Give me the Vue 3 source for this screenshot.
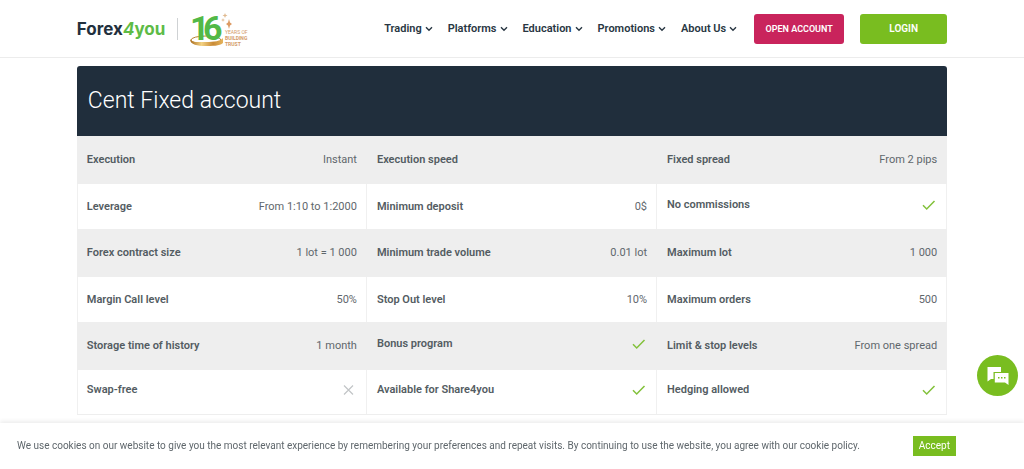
<script setup>
const menu = ['Trading', 'Platforms', 'Education', 'Promotions', 'About Us']

const rows = [
  [['Execution', 'Instant'], ['Execution speed', ''], ['Fixed spread', 'From 2 pips']],
  [['Leverage', 'From 1:10 to 1:2000'], ['Minimum deposit', '0$'], ['No commissions', true]],
  [['Forex contract size', '1 lot = 1 000'], ['Minimum trade volume', '0.01 lot'], ['Maximum lot', '1 000']],
  [['Margin Call level', '50%'], ['Stop Out level', '10%'], ['Maximum orders', '500']],
  [['Storage time of history', '1 month'], ['Bonus program', true], ['Limit & stop levels', 'From one spread']],
  [['Swap-free', false], ['Available for Share4you', true], ['Hedging allowed', true]],
]

const isIcon = (value) => typeof value === 'boolean'
</script>

<template>
  <div class="page">
    <header class="top">
      <div class="wrap bar">
        <a class="brand" href="#" aria-label="Forex4you home">
          <span class="word">Forex<span class="green"><i>4</i>you</span></span>
          <svg class="years" width="64" height="40" viewBox="0 0 64 40">
            <defs>
              <linearGradient id="gold" x1="0" x2="1" y1="0" y2="0">
                <stop offset="0" stop-color="#a86a1c" />
                <stop offset="0.35" stop-color="#f3d283" />
                <stop offset="0.7" stop-color="#c98a35" />
                <stop offset="1" stop-color="#e5b45c" />
              </linearGradient>
            </defs>
            <ellipse cx="16" cy="31" rx="15" ry="4" fill="none" stroke="#b9822f" stroke-width="1" />
            <text class="sixteen" y="31"><tspan x="0">1</tspan><tspan x="13">6</tspan></text>
            <path d="M0 30C2 34 8 33 16 33S31 32 33 29V34C30 37 22 37 15 37S0 36 0 30Z" fill="url(#gold)" />
            <path d="M39 10L40 13.500L42 15L40 16.500L39 20L38 16.500L36 15L38 13.500Z" fill="#dc9a63" />
            <path d="M35 4l.7 1.800 1.800.7-1.800.7-.7 1.800-.7-1.800-1.800-.7 1.800-.7zM33 9l.5 1.500 1.500.5-1.500.5-.5 1.500-.5-1.500-1.500-.5 1.500-.5z" fill="#e0b98f" />
            <text class="small light" x="35" y="25">YEARS OF</text>
            <text class="small" x="35" y="31">BUILDING</text>
            <text class="small" x="35" y="37">TRUST</text>
          </svg>
        </a>
        <nav class="menu">
          <button v-for="item in menu" :key="item" type="button" class="item">
            {{ item }}
            <svg width="8" height="6" viewBox="0 0 8 6"><path d="M1 1.200L4 4.200L7 1.200" fill="none" stroke="#283642" stroke-width="1.400" /></svg>
          </button>
        </nav>
        <a class="btn open" href="#">OPEN ACCOUNT</a>
        <a class="btn login" href="#">LOGIN</a>
      </div>
    </header>

    <main class="wrap">
      <h1>Cent Fixed account</h1>
      <table>
        <tbody>
          <tr v-for="(row, r) in rows" :key="r">
            <template v-for="[label, value] in row" :key="label">
              <th scope="row" :class="{ raised: isIcon(value) }">{{ label }}</th>
              <td :class="{ raised: isIcon(value) }">
                <svg v-if="value === true" class="mark" role="img" aria-label="Yes" width="16" height="12" viewBox="0 0 16 12"><path d="M2 6.300L5.700 10L13.500 2" fill="none" stroke="#82c13a" stroke-width="1.500" /></svg>
                <svg v-else-if="value === false" class="mark" role="img" aria-label="No" width="16" height="12" viewBox="0 0 16 12"><path d="M3 1.500L12 10.500M12 1.500L3 10.500" fill="none" stroke="#c2c5c7" stroke-width="1.200" /></svg>
                <template v-else>{{ value }}</template>
              </td>
            </template>
          </tr>
        </tbody>
      </table>
    </main>

    <button type="button" class="chat" aria-label="Chat">
      <svg width="24" height="20" viewBox="0 0 24 20">
        <path d="M1.500 1H15V6H7.500V13H5L1.500 15.500Z" fill="#fff" />
        <path d="M8.800 7H22.500V19L19 16.500H8.800Z" fill="#fff" />
        <path d="M12 11h1.500v1.500h-1.500zM15 11h1.500v1.500h-1.500zM18 11h1.500v1.500h-1.500z" fill="#79bd20" />
      </svg>
    </button>

    <aside class="cookies">
      <p>We use cookies on our website to give you the most relevant experience by remembering your preferences and repeat visits. By continuing to use the website, you agree with our cookie policy.</p>
      <button type="button" class="accept">Accept</button>
    </aside>
  </div>
</template>

<style>
body {
  background: #fff;
}
</style>

<style scoped>
.page {
  font-family: Roboto, "Liberation Sans", sans-serif;
  font-size: 11px;
  line-height: 16px;
  color: #5f676c;
  padding-bottom: 52px;
}
.wrap {
  width: 85%;
  margin: 0 auto;
}
.top {
  border-bottom: 1px solid #ececec;
  margin-bottom: 8px;
}
.bar {
  display: flex;
  align-items: center;
  height: 57px;
}
.brand {
  display: flex;
  align-items: center;
  margin-right: auto;
  text-decoration: none;
}
.word {
  font-family: Inter, sans-serif;
  font-size: 17px;
  font-weight: 700;
  line-height: 22px;
  color: #22303d;
  padding-right: 12px;
  border-right: 1px solid #cfd2d4;
  margin-right: 12px;
}
.green {
  color: #5dbb46;
}
.years {
  display: block;
}
.sixteen {
  font-family: Roboto, sans-serif;
  font-size: 34px;
  font-weight: 700;
  fill: #52b947;
}
.small {
  font-family: Roboto, sans-serif;
  font-size: 5px;
  font-weight: 700;
  fill: #d39a67;
}
.light {
  font-weight: 400;
}
.menu {
  display: flex;
  gap: 15px;
  margin-right: 17px;
}
.item {
  display: flex;
  align-items: center;
  gap: 3px;
  padding: 0;
  border: 0;
  background: none;
  font: inherit;
  font-weight: 600;
  color: #283642;
}
.btn {
  width: 90px;
  border-radius: 3px;
  font-size: 10px;
  font-weight: 600;
  line-height: 30px;
  color: #fff;
  text-align: center;
  text-decoration: none;
}
.open {
  background: #c9245c;
  font-size: 9px;
  margin-right: 16px;
}
.login {
  width: 87px;
  background: #79bd20;
}
h1 {
  margin: 0;
  padding: 18px 11px;
  border-radius: 3px 3px 0 0;
  background: #202e3c;
  color: #fff;
  font-size: 23px;
  font-weight: 300;
  line-height: 34px;
}
table {
  width: 100%;
  table-layout: fixed;
  border-collapse: separate;
  border-spacing: 0;
}
tr {
  height: 45px;
}
tr:nth-child(odd) {
  height: 48px;
  background: #eee;
}
th,
td {
  box-sizing: border-box;
  padding: 0 10px;
  vertical-align: middle;
  white-space: nowrap;
}
th {
  width: 19%;
  padding-right: 0;
  text-align: left;
  font-weight: 600;
  color: #535c62;
}
td {
  text-align: right;
}
.raised {
  padding-bottom: 4px;
}
.mark {
  display: block;
  margin-left: auto;
}
tr:nth-child(even) td {
  box-shadow: inset -1px 0 #f0f0f0;
}
tr:nth-child(even) th:first-child {
  box-shadow: inset 1px 0 #f0f0f0;
}
tr:last-child > * {
  border-bottom: 1px solid #eee;
}
.chat {
  position: fixed;
  right: 6px;
  bottom: 73px;
  width: 41px;
  height: 41px;
  padding: 0;
  border: 0;
  border-radius: 50%;
  background: #79bd20;
  display: grid;
  place-items: center;
}
.cookies {
  position: fixed;
  left: 0;
  right: 0;
  bottom: 0;
  display: flex;
  align-items: center;
  justify-content: space-between;
  padding: 13px 68px 13px 17px;
  background: #fff;
  box-shadow: 0 -2px 4px #ededed;
  font-size: 10px;
}
p {
  margin: 0;
}
.accept {
  padding: 0 6px;
  border: 0;
  background: #79bd20;
  color: #fff;
  font: inherit;
  line-height: 20px;
}
</style>
